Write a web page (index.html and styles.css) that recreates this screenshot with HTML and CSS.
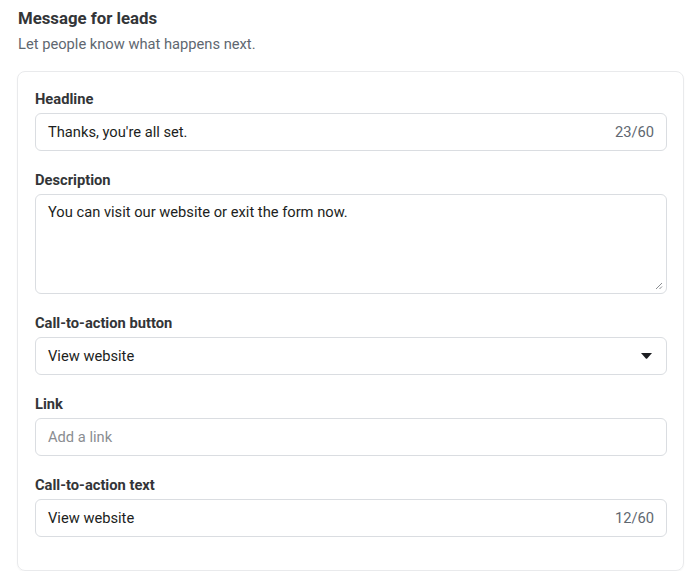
FILE: index.html
```html
<!DOCTYPE html>
<html>
<head>
<meta charset="utf-8">
<link rel="stylesheet" href="styles.css">
</head>
<body>
<div class="page">
  <h1 class="title">Message for leads</h1>
  <p class="subtitle">Let people know what happens next.</p>
  <div class="card">
    <div class="field">
      <div class="label">Headline</div>
      <div class="box">
        <span class="value">Thanks, you're all set.</span>
        <span class="count">23/60</span>
      </div>
    </div>
    <div class="field">
      <div class="label">Description</div>
      <div class="box area">
        <span class="value">You can visit our website or exit the form now.</span>
        <svg class="grip" width="8" height="8" viewBox="0 0 8 8"><path d="M7 1 L1 7 M7 4.5 L4.5 7" stroke="#8a8d91" stroke-width="1" fill="none"/></svg>
      </div>
    </div>
    <div class="field">
      <div class="label">Call-to-action button</div>
      <div class="box">
        <span class="value">View website</span>
        <svg class="caret" width="11" height="6" viewBox="0 0 11 6"><path d="M0 0 H11 L6.2 5.4 Q5.5 6 4.8 5.4 Z" fill="#1c1e21"/></svg>
      </div>
    </div>
    <div class="field">
      <div class="label">Link</div>
      <div class="box">
        <span class="placeholder">Add a link</span>
      </div>
    </div>
    <div class="field">
      <div class="label">Call-to-action text</div>
      <div class="box">
        <span class="value">View website</span>
        <span class="count">12/60</span>
      </div>
    </div>
  </div>
</div>
</body>
</html>
```
FILE: styles.css
```css
* { box-sizing: border-box; }
html, body { margin: 0; padding: 0; background: #ffffff; }
body { font-family: Roboto, "Liberation Sans", Arial, sans-serif; color: #1c1e21; }
.page { padding: 7px 16px 0 17px; width: 700px; }
.title { margin: 0 0 0 1px; font-size: 16.8px; font-weight: 700; line-height: 22px; color: #333538; }
.subtitle { margin: 5px 0 0 1px; font-size: 14.7px; line-height: 20px; color: #606770; }
.card {
  margin-top: 17px;
  border: 1px solid #e9eaec;
  border-radius: 8px;
  padding: 17px 16px 33px 17px;
  box-shadow: 0 1px 2px rgba(0,0,0,0.04);
  display: flex;
  flex-direction: column;
  gap: 19px;
}
.label { font-size: 14.7px; font-weight: 700; line-height: 20px; color: #333538; margin-bottom: 4px; }
.box {
  height: 38px;
  border: 1px solid #dadde1;
  border-radius: 6px;
  padding: 0 12px;
  display: flex;
  align-items: center;
  justify-content: space-between;
  font-size: 14.7px;
  position: relative;
}
.box.area { height: 100px; align-items: flex-start; padding-top: 8px; }
.value { color: #1c1e21; }
.placeholder { color: #8a8d91; }
.count { color: #606770; }
.caret { margin-right: 2px; }
.grip { position: absolute; right: 3px; bottom: 3px; }
```
